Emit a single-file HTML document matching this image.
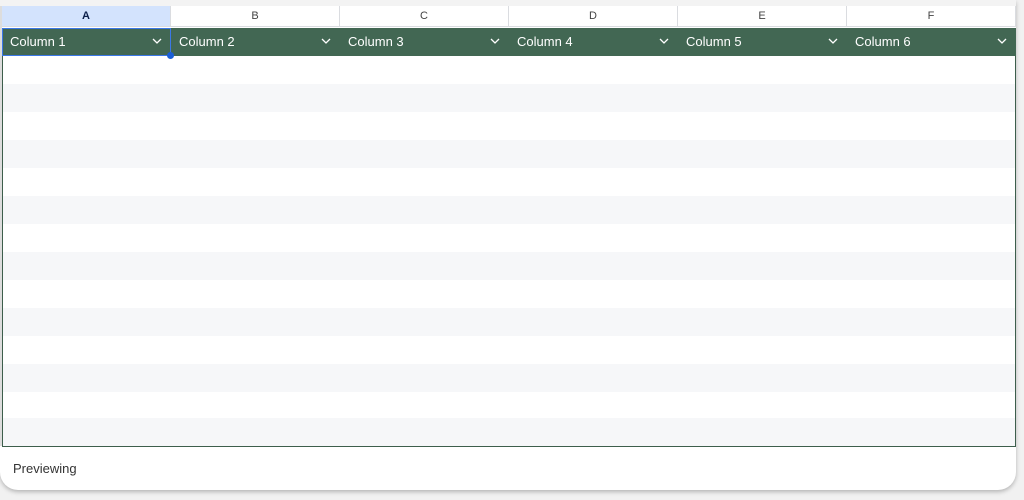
<!DOCTYPE html>
<html><head><style>
body{margin:0;width:1024px;height:500px;background:#f1f1f1;font-family:"Liberation Sans",Arial,sans-serif;position:relative;overflow:hidden}
.card{position:absolute;left:0;top:0;width:1016px;height:490px;background:#fff;border-radius:0 0 18px 18px;box-shadow:0 2px 4px rgba(0,0,0,.25)}
.top{position:absolute;left:0;top:0;width:1016px;height:6px;background:#f3f3f3}
.hdr{position:absolute;top:6px;height:21px;border-right:1px solid #dadce0;border-bottom:1px solid #dadce0;box-sizing:border-box;font-size:11px;color:#444;text-align:center;line-height:21px;background:#fff}
.g{position:absolute;top:28px;height:28px;background:#426753;color:#fff;font-size:13px;line-height:27px;box-sizing:border-box;padding-left:8px}
.g svg{position:absolute;right:9px;top:10px}
.row{position:absolute;left:3px;width:1012px;height:28px}
.tb{position:absolute;left:2px;top:28px;width:1014px;height:419px;border:1px solid #3d5e4c;border-top:none;box-sizing:border-box}
</style></head><body>
<div class="card">
<div class="top"></div>
<div class="hdr" style="left:2px;width:169px;background:#d3e3fd;color:#0b1f4a;font-weight:bold">A</div>
<div class="hdr" style="left:171px;width:169px">B</div>
<div class="hdr" style="left:340px;width:169px">C</div>
<div class="hdr" style="left:509px;width:169px">D</div>
<div class="hdr" style="left:678px;width:169px">E</div>
<div class="hdr" style="left:847px;width:169px">F</div>
<div style="position:absolute;left:0;top:6px;width:2px;height:440px;background:#ddd"></div>

<div class="row" style="top:84px;background:#f6f7f9"></div>
<div class="row" style="top:140px;background:#f6f7f9"></div>
<div class="row" style="top:196px;background:#f6f7f9"></div>
<div class="row" style="top:252px;background:#f6f7f9"></div>
<div class="row" style="top:308px;background:#f6f7f9"></div>
<div class="row" style="top:364px;background:#f6f7f9"></div>
<div class="row" style="top:418px;height:28px;background:#f6f7f9"></div>
<div class="tb"></div>

<div class="g" style="left:2px;width:169px">Column 1<svg width="10" height="7"><path d="M1 1l4 4 4-4" stroke="#fff" fill="none" stroke-width="1.3"/></svg></div>
<div class="g" style="left:171px;width:169px">Column 2<svg width="10" height="7"><path d="M1 1l4 4 4-4" stroke="#fff" fill="none" stroke-width="1.3"/></svg></div>
<div class="g" style="left:340px;width:169px">Column 3<svg width="10" height="7"><path d="M1 1l4 4 4-4" stroke="#fff" fill="none" stroke-width="1.3"/></svg></div>
<div class="g" style="left:509px;width:169px">Column 4<svg width="10" height="7"><path d="M1 1l4 4 4-4" stroke="#fff" fill="none" stroke-width="1.3"/></svg></div>
<div class="g" style="left:678px;width:169px">Column 5<svg width="10" height="7"><path d="M1 1l4 4 4-4" stroke="#fff" fill="none" stroke-width="1.3"/></svg></div>
<div class="g" style="left:847px;width:169px">Column 6<svg width="10" height="7"><path d="M1 1l4 4 4-4" stroke="#fff" fill="none" stroke-width="1.3"/></svg></div>
<div style="position:absolute;left:2px;top:28px;width:169px;height:28px;border:1px solid #3b78e7;box-sizing:border-box"></div>
<div style="position:absolute;left:167px;top:52px;width:7px;height:7px;border-radius:50%;background:#1a5fd8"></div>

<div style="position:absolute;left:13px;top:461px;font-size:13px;color:#333">Previewing</div>
</div>
</body></html>
